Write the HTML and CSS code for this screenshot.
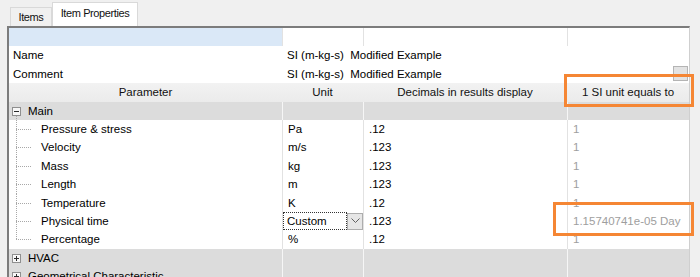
FILE: index.html
```html
<!DOCTYPE html>
<html lang="en">
<head>
    <meta charset="UTF-8">
    <title>Item Properties</title>
    <link rel="stylesheet" href="styles.css">
</head>
<body>
    <div class="tabs">
        <div class="tab">Items</div>
        <div class="tab active">Item Properties</div>
    </div>

    <div class="panel">
        <div class="row top">
            <div class="cell selected"></div>
            <div class="cell sep"></div>
            <div class="cell sep"></div>
            <div class="cell sep"></div>
        </div>
        <div class="row info">
            <div class="cell">Name</div>
            <div class="cell wide">SI (m-kg-s)  Modified Example</div>
        </div>
        <div class="row info">
            <div class="cell">Comment</div>
            <div class="cell wide">SI (m-kg-s)  Modified Example</div>
            <div class="mini-button"></div>
        </div>
        <div class="row header">
            <div class="cell">Parameter</div>
            <div class="cell">Unit</div>
            <div class="cell">Decimals in results display</div>
            <div class="cell">1 SI unit equals to</div>
        </div>

        <div class="row group">
            <div class="cell branch"><span class="toggle open"></span>Main</div>
            <div class="cell sep"></div>
            <div class="cell sep"></div>
            <div class="cell sep"></div>
        </div>
        <div class="row child">
            <div class="cell label">Pressure &amp; stress</div>
            <div class="cell sep">Pa</div>
            <div class="cell sep">.12</div>
            <div class="cell sep ratio">1</div>
        </div>
        <div class="row child">
            <div class="cell label">Velocity</div>
            <div class="cell sep">m/s</div>
            <div class="cell sep">.123</div>
            <div class="cell sep ratio">1</div>
        </div>
        <div class="row child">
            <div class="cell label">Mass</div>
            <div class="cell sep">kg</div>
            <div class="cell sep">.123</div>
            <div class="cell sep ratio">1</div>
        </div>
        <div class="row child">
            <div class="cell label">Length</div>
            <div class="cell sep">m</div>
            <div class="cell sep">.123</div>
            <div class="cell sep ratio">1</div>
        </div>
        <div class="row child">
            <div class="cell label">Temperature</div>
            <div class="cell sep">K</div>
            <div class="cell sep">.12</div>
            <div class="cell sep ratio">1</div>
        </div>
        <div class="row child">
            <div class="cell label">Physical time</div>
            <div class="cell sep combo-cell"><div class="combo"><div class="combo-text">Custom</div><div class="combo-button"><svg width="9" height="6" viewBox="0 0 9 6"><path d="M0.5 0.5 L4.5 4.5 L8.5 0.5" fill="none" stroke="#606060" stroke-width="1"/></svg></div></div></div>
            <div class="cell sep">.123</div>
            <div class="cell sep ratio">1.15740741e-05 Day</div>
        </div>
        <div class="row child last">
            <div class="cell label">Percentage</div>
            <div class="cell sep">%</div>
            <div class="cell sep">.12</div>
            <div class="cell sep ratio">1</div>
        </div>

        <div class="row group">
            <div class="cell"><span class="toggle"></span>HVAC</div>
            <div class="cell sep"></div>
            <div class="cell sep"></div>
            <div class="cell sep"></div>
        </div>
        <div class="row group">
            <div class="cell"><span class="toggle"></span>Geometrical Characteristic</div>
            <div class="cell sep"></div>
            <div class="cell sep"></div>
            <div class="cell sep"></div>
        </div>
    </div>

    <!-- callouts -->
    <div class="callout callout-header"></div>
    <div class="callout callout-time"></div>
</body>
</html>
```

FILE: styles.css
```css
body {
    margin: 0;
    background: #f0f0f0;
    font-family: 'Liberation Sans', Arial, sans-serif;
    font-size: 11.5px;
    color: #000;
    width: 700px;
    height: 277px;
    overflow: hidden;
    position: relative;
}

.tabs {
    display: flex;
    align-items: flex-end;
    height: 26px;
    padding-left: 10px;
}

.tab {
    box-sizing: border-box;
    height: 19px;
    width: 42px;
    padding-top: 3px;
    text-align: center;
    border: 1px solid #d9d9d9;
    border-bottom: none;
    font-size: 11px;
    letter-spacing: -0.4px;
    color: #111;
}

.tab.active {
    height: 24px;
    width: 86px;
    padding-top: 4px;
    background: #fff;
    border-color: #d9d9d9;
}

.panel {
    margin-left: 7px;
    width: 683px;
    box-sizing: border-box;
    border-top: 2px solid #7c7c7c;
    border-left: 2px solid #7c7c7c;
    border-right: 1px solid #cfcfcf;
    height: 260px;
}

.row {
    display: grid;
    grid-template-columns: 273px 81px 204px 1fr;
    height: 18.4px;
    line-height: 18.4px;
    background: #fff;
    position: relative;
}

.cell {
    white-space: pre;
    overflow: hidden;
    padding-left: 5px;
}

.cell.sep {
    border-left: 1px solid #e2e2e2;
}

.row.top .cell.selected {
    background: #dae8f7;
}

.row.info .cell:first-child {
    padding-left: 4px;
}

.row.info .cell.wide {
    grid-column: 2 / 5;
    padding-left: 5px;
}

.mini-button {
    position: absolute;
    right: 1px;
    top: 1.5px;
    width: 15px;
    height: 15px;
    box-sizing: border-box;
    background: #e3e3e3;
    border: 1px solid #b4b4b4;
}

.row.header {
    background: linear-gradient(#f2f2f2, #ebebeb);
}

.row.header .cell {
    text-align: center;
    padding-left: 0;
    color: #111;
}

.row.group {
    background: #dcdcdc;
}

.row.group .cell {
    padding-left: 19px;
}

.row.group .cell:first-child {
    position: relative;
}

.row.group .cell.sep {
    border-left-color: #f6f6f6;
}

.toggle {
    position: absolute;
    left: 3px;
    top: 5px;
    width: 9px;
    height: 9px;
    box-sizing: border-box;
    border: 1px solid #8f8f8f;
    background: #f7f7f7;
}

.toggle::before,
.toggle:not(.open)::after {
    content: "";
    position: absolute;
    background: #2a2a2a;
}

.toggle::before {
    left: 1px;
    top: 3px;
    width: 5px;
    height: 1px;
}

.toggle:not(.open)::after {
    left: 3px;
    top: 1px;
    width: 1px;
    height: 5px;
}

/* dotted tree lines */
.cell.branch::after {
    content: "";
    position: absolute;
    left: 7px;
    top: 14px;
    width: 1px;
    height: 5px;
    background: repeating-linear-gradient(to bottom, #a8a8a8 0 1px, transparent 1px 2px);
}

.row.child .cell.label {
    padding-left: 32px;
    position: relative;
}

.row.child .cell.label::before {
    content: "";
    position: absolute;
    left: 7px;
    top: 0;
    width: 1px;
    height: 100%;
    background: repeating-linear-gradient(to bottom, #a8a8a8 0 1px, transparent 1px 2px);
}

.row.child.last .cell.label::before {
    height: 50%;
}

.row.child .cell.label::after {
    content: "";
    position: absolute;
    left: 7px;
    top: 9px;
    width: 16px;
    height: 1px;
    background: repeating-linear-gradient(to right, #a8a8a8 0 1px, transparent 1px 2px);
}

.ratio {
    color: #9e9e9e;
}

.combo-cell {
    padding-left: 0;
    white-space: normal;
}

.combo {
    display: flex;
    height: 18.4px;
}

.combo-text {
    width: 64px;
    box-sizing: border-box;
    border: 1px dotted #333;
    padding-left: 3px;
    line-height: 16px;
    height: 18.4px;
    background: #fff;
}

.combo-button {
    width: 16px;
    height: 17px;
    box-sizing: border-box;
    margin-top: 1px;
    background: #e6e6e6;
    border: 1px solid #adadad;
    display: flex;
    align-items: center;
    justify-content: center;
}

.callout {
    position: absolute;
    box-sizing: border-box;
    border: 3px solid #f58634;
}

.callout-header {
    left: 564px;
    top: 74px;
    width: 130px;
    height: 33px;
}

.callout-time {
    left: 553px;
    top: 202px;
    width: 141px;
    height: 34px;
}
```
